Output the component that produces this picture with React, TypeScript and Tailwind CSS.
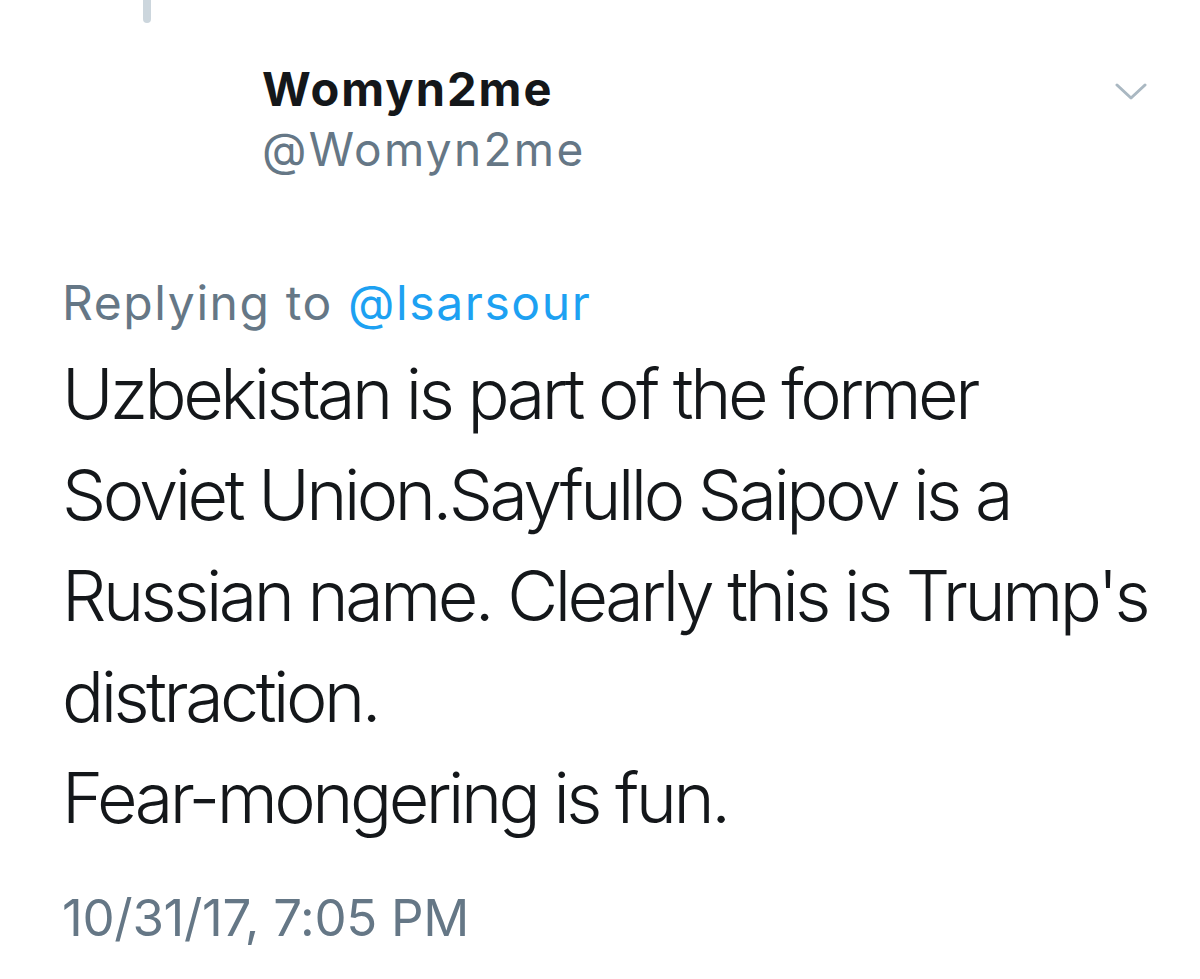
export default function App() {
  return (
    <main
      className="w-[1200px] h-[979px] bg-white overflow-hidden relative"
      style={{ fontFamily: "Inter, 'Noto Sans', sans-serif" }}
    >
      <div className="ml-[143px] w-[8px] h-[23px] rounded-b-full bg-[#ccd6dd]" />

      <div className="flex justify-between pl-[262px] pr-[53px] mt-[36px]">
        <div className="flex flex-col">
          <span className="text-[47px] leading-[60px] font-bold text-[#14171a] tracking-[2px]">
            Womyn2me
          </span>
          <span className="text-[46px] leading-[60px] text-[#657786] tracking-[2.3px]">
            @Womyn2me
          </span>
        </div>
        <svg width="32" height="18" viewBox="0 0 32 18" className="mt-[24px]">
          <path d="M2 2 L16 15 L30 2" fill="none" stroke="#aab8c2" strokeWidth="3" strokeLinecap="round" strokeLinejoin="round" />
        </svg>
      </div>

      <div className="pl-[62px] mt-[94px] text-[48px] leading-[60px] text-[#657786] tracking-[1.6px]">
        Replying to <span className="text-[#1da1f2]">@lsarsour</span>
      </div>

      <p className="pl-[62px] mt-[10px] whitespace-nowrap text-[70px] leading-[101px] font-light text-[#14171a] tracking-[-3.5px]">
        Uzbekistan is part of the former
        <br />
        Soviet Union.Sayfullo Saipov is a
        <br />
        Russian name. Clearly this is Trump's
        <br />
        distraction.
        <br />
        Fear-mongering is fun.
      </p>

      <div className="pl-[62px] mt-[40px] text-[51px] leading-[60px] text-[#657786] tracking-[-0.3px]">
        10/31/17, 7:05 PM
      </div>
    </main>
  );
}
